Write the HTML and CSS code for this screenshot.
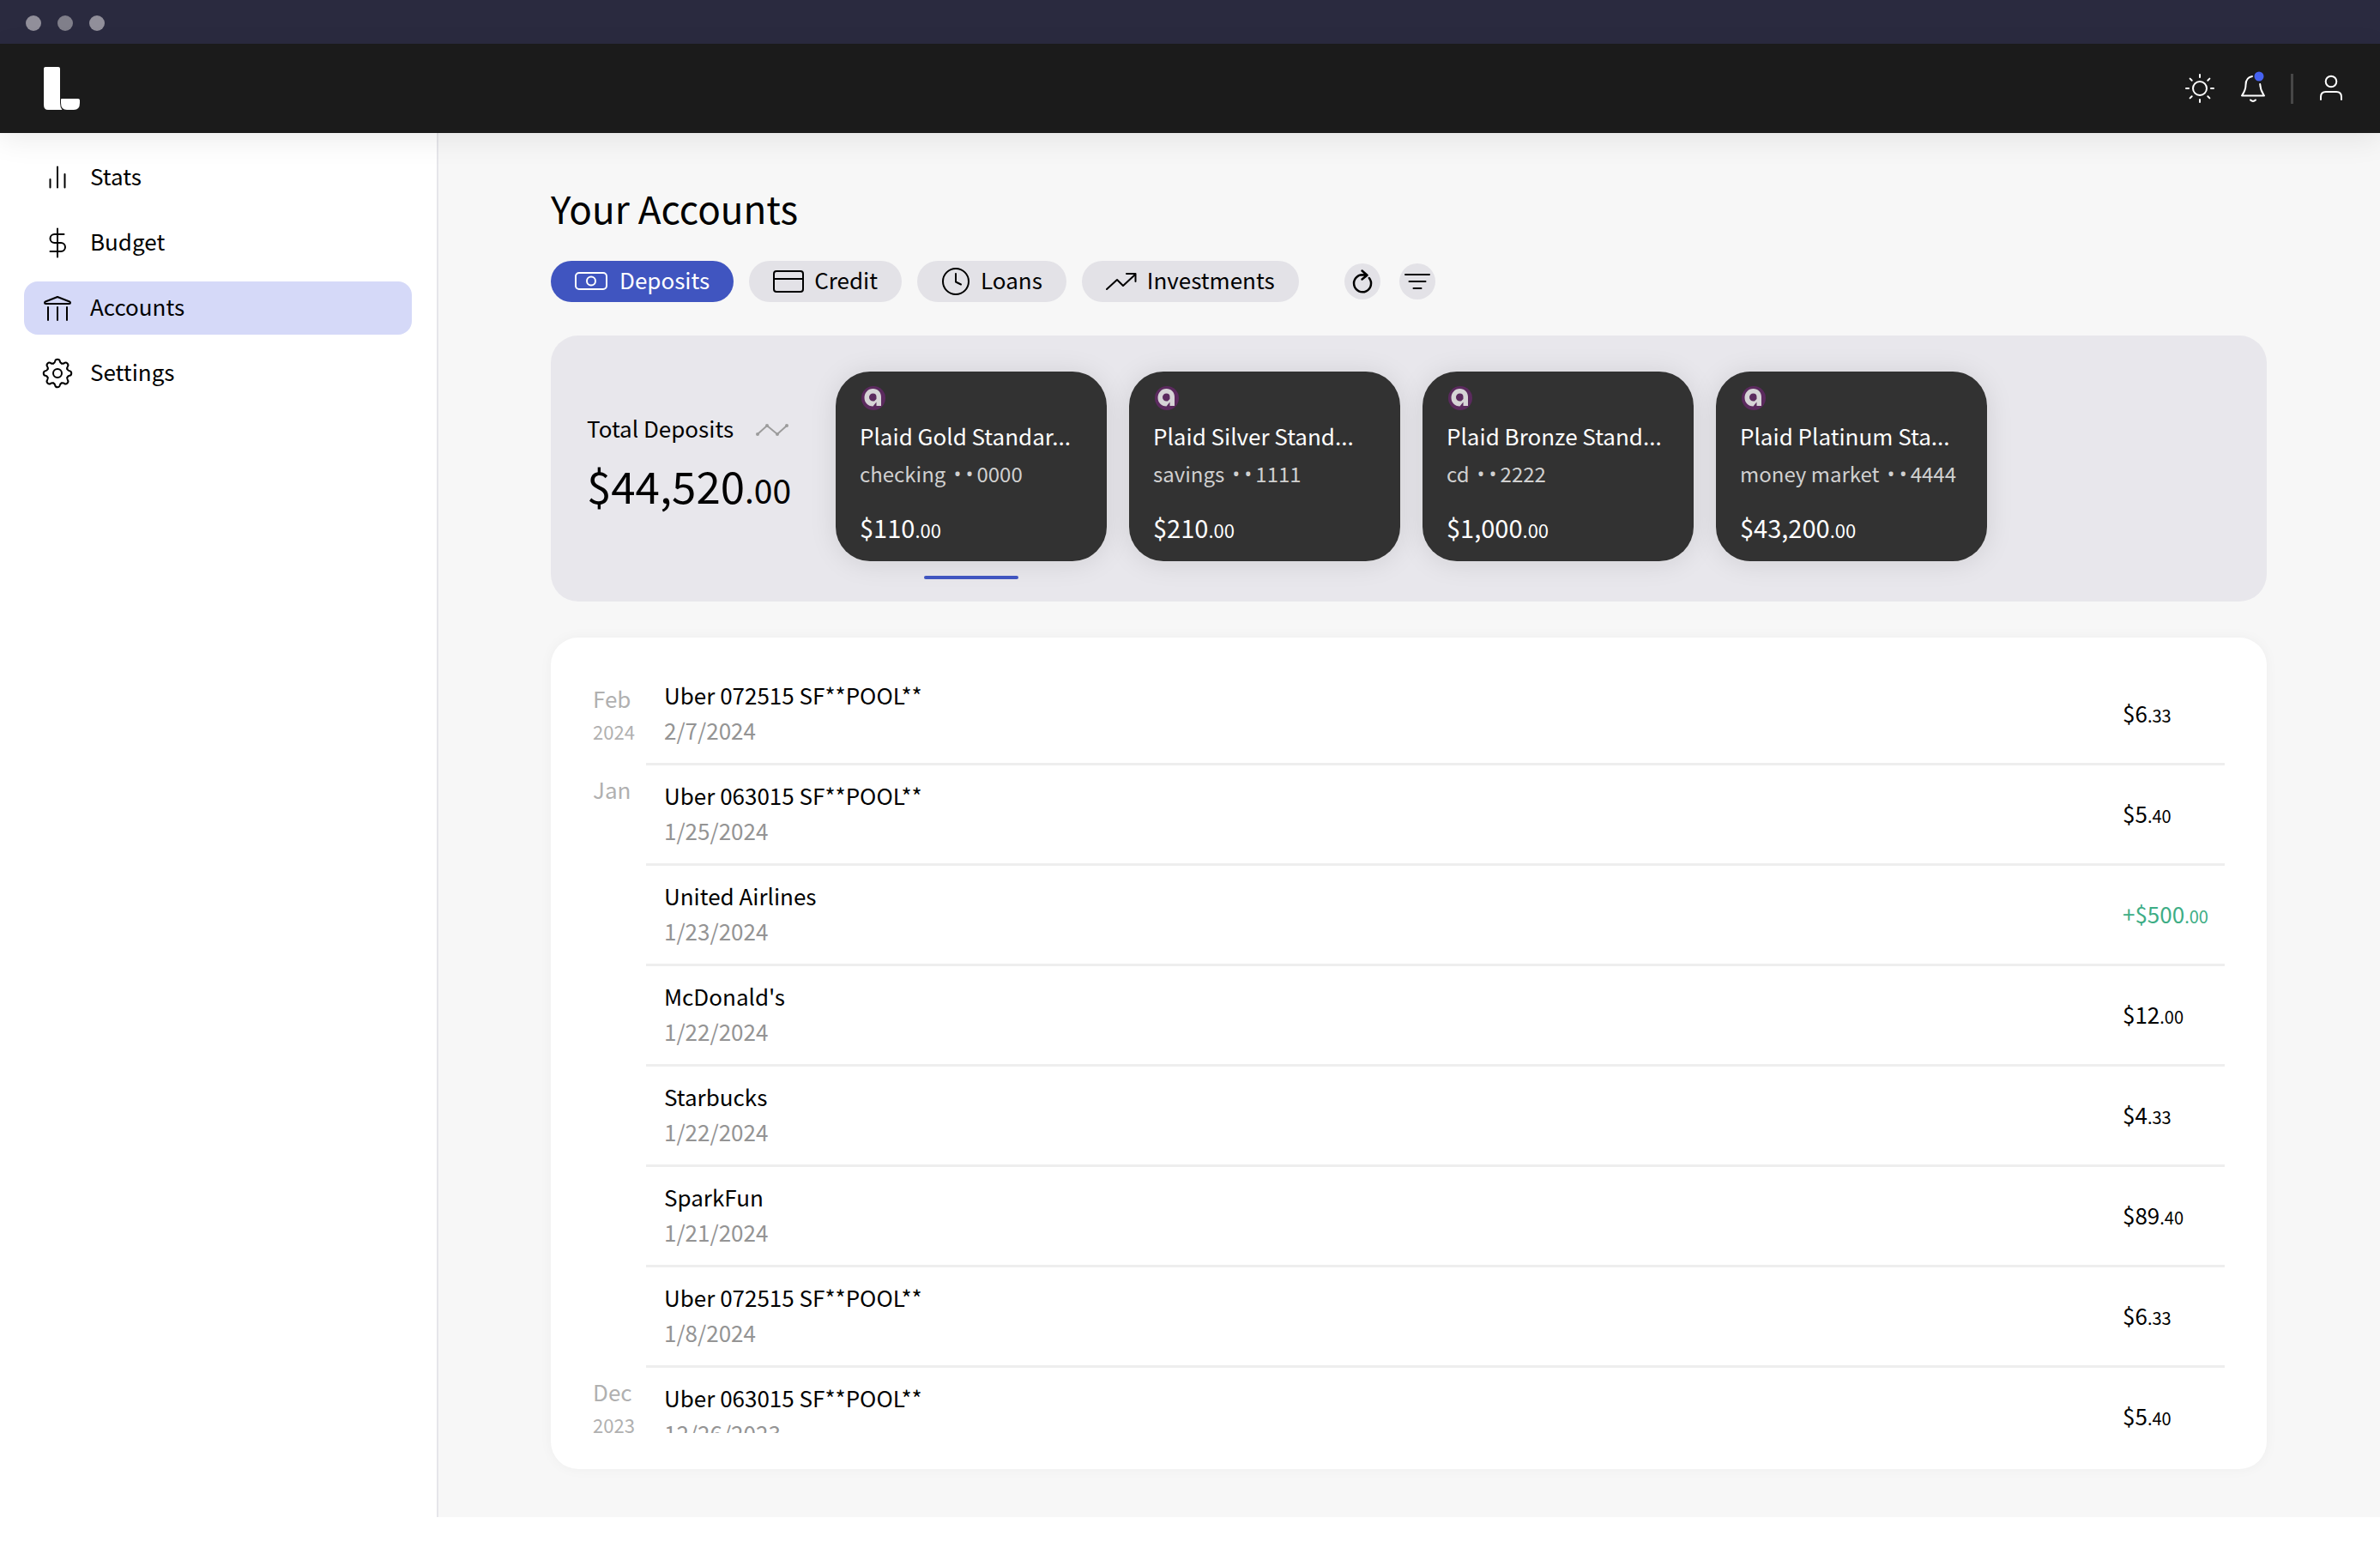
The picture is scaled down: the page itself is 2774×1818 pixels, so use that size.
FILE: index.html
```html
<!DOCTYPE html>
<html lang="en">
<head>
<meta charset="utf-8">
<title>Your Accounts</title>
<link rel="stylesheet" href="styles.css">
</head>
<body>
<svg class="defs" width="0" height="0" aria-hidden="true">
  <symbol id="bank-logo" viewBox="0 0 30 30">
    <circle cx="16" cy="15" r="14" fill="#5b2a5e"/>
    <path fill="#d6d4d6" fill-rule="evenodd" d="M15.500 4C21 4 25 8 25 13.500V24H19.500V19.500L15.500 24.500C9.500 24.500 5.500 20 5.500 14.500S9.500 4 15.500 4ZM15.500 9.500A4.500 4.500 0 0 0 15.500 18.500H17L19.500 16V13.500A4 4 0 0 0 15.500 9.500Z"/>
  </symbol>
</svg>

<div class="window-bar">
  <span class="window-dot"></span>
  <span class="window-dot window-dot-mid"></span>
  <span class="window-dot"></span>
</div>

<header class="topbar">
  <a class="brand" href="#" aria-label="Home">
    <svg width="42" height="50" viewBox="0 0 42 50">
      <path fill="#fff" d="M2 0H17Q19 0 19 2V42Q19 47 21.500 50H5Q0 50 0 44V2Q0 0 2 0Z"/>
      <path fill="#fff" d="M21 37H40Q42 37 42 39V42Q42 50 35 50H27Q20 50 20 42V38Q20 37 21 37Z"/>
    </svg>
  </a>
  <div class="topbar-actions">
    <button class="icon-button" aria-label="Theme">
      <svg width="36" height="36" viewBox="-18 -18 36 36" fill="none" stroke="#fff" stroke-width="2" stroke-linecap="round">
        <circle r="8"/>
        <path d="M0 -16V-13M0 13V16M-16 0H-13M13 0H16M-11.400 -11.400L-9.300 -9.300M9.300 9.300L11.400 11.400M-11.400 11.400L-9.300 9.300M9.300 -9.300L11.400 -11.400"/>
      </svg>
    </button>
    <button class="icon-button" aria-label="Notifications">
      <svg width="36" height="40" viewBox="0 2 36 40" fill="none" stroke="#fff" stroke-width="2" stroke-linecap="round" stroke-linejoin="round">
        <path d="M17 8C11 9 9.500 13 9.500 18C9.500 24 7.500 26.500 5 30.500H31C28.500 26.500 26.500 24 26.200 17"/>
        <path d="M15 35.500Q18 38.500 21 35.500"/>
        <circle cx="25" cy="8" r="5.500" fill="#4662f0" stroke="none"/>
      </svg>
    </button>
    <span class="topbar-divider"></span>
    <button class="icon-button" aria-label="Profile">
      <svg width="36" height="36" viewBox="0 0 36 36" fill="none" stroke="#fff" stroke-width="2" stroke-linecap="round">
        <circle cx="18" cy="10" r="6.300"/>
        <path d="M6 31V28Q6 22 12 22H24Q30 22 30 28V31"/>
      </svg>
    </button>
  </div>
</header>

<div class="shell">
  <nav class="sidebar">
    <a class="nav-item" href="#">
      <svg width="36" height="36" viewBox="0 0 36 36" class="line-icon"><path d="M9.500 20V29.500M18 5.500V29.500M26.500 14V29.500"/></svg>
      Stats
    </a>
    <a class="nav-item" href="#">
      <svg width="36" height="36" viewBox="0 0 36 36" class="line-icon"><path d="M18 1.500V34.500M25.500 8H14.500A5 5 0 0 0 14.500 18H22A5 5 0 0 1 22 28H9.500"/></svg>
      Budget
    </a>
    <a class="nav-item nav-item-active" href="#" aria-current="page">
      <svg width="36" height="36" viewBox="0 0 36 36" class="line-icon"><path d="M18 5L4 10.500Q3 11 3 12T4.500 13H31.500Q33 13 33 12T32 10.500ZM7 17V32M18 17V32M29 17V32"/></svg>
      Accounts
    </a>
    <a class="nav-item" href="#">
      <svg width="36" height="36" viewBox="-18 -18 36 36" class="line-icon">
        <circle r="5"/>
        <g id="gear-half">
          <path id="tooth" d="M-4.750 -11.460C-3.400 -12 -3 -12.400 -2.800 -14C-2.400 -17 2.400 -17 2.800 -14C3 -12.400 3.400 -12 4.750 -11.460"/>
          <use href="#tooth" transform="rotate(45)"/>
          <use href="#tooth" transform="rotate(90)"/>
          <use href="#tooth" transform="rotate(135)"/>
        </g>
        <use href="#gear-half" transform="rotate(180)"/>
      </svg>
      Settings
    </a>
  </nav>

  <main class="content">
    <h1 class="title">Your Accounts</h1>

    <div class="toolbar">
      <button class="tab tab-active">
        <svg width="40" height="28" viewBox="0 0 40 28" class="line-icon"><rect x="1" y="4" width="36" height="19" rx="4"/><circle cx="19" cy="13.500" r="5"/></svg>
        Deposits
      </button>
      <button class="tab">
        <svg width="36" height="28" viewBox="0 0 36 28" class="line-icon"><rect x="1" y="2" width="34" height="24" rx="3"/><path d="M1 11H35"/></svg>
        Credit
      </button>
      <button class="tab">
        <svg width="34" height="34" viewBox="0 0 34 34" class="line-icon"><circle cx="17" cy="17" r="15"/><path d="M17 8V17.500L23 20.500"/></svg>
        Loans
      </button>
      <button class="tab">
        <svg width="36" height="28" viewBox="0 0 36 28" class="line-icon"><path d="M1 23L13 12L20 19L34 6M24 5H34.500V14"/></svg>
        Investments
      </button>
      <div class="tools">
        <button class="round-button" aria-label="Refresh">
          <svg width="42" height="42" viewBox="0 0 42 42" class="line-icon refresh-icon"><path d="M28.800 17A10 10 0 1 1 21 13.300L26.500 13.800M20.500 8.500L26.500 13.800L20.500 18.500"/></svg>
        </button>
        <button class="round-button" aria-label="Filter">
          <svg width="30" height="24" viewBox="0 0 30 24" class="line-icon"><path d="M1 4H29M5.500 12H24.500M10.500 20H19.500"/></svg>
        </button>
      </div>
    </div>

    <section class="summary">
      <div class="total">
        <div class="total-label">Total Deposits
          <svg width="40" height="18" viewBox="0 0 40 18" fill="#9c9c9c" stroke="#9c9c9c" stroke-width="2"><path fill="none" d="M3 16L14 6L26 16L37 6"/><circle cx="3" cy="16" r="1"/><circle cx="14" cy="6" r="1"/><circle cx="26" cy="16" r="1"/><circle cx="37" cy="6" r="1"/></svg>
        </div>
        <div class="total-amount">$44,520<span class="total-cents">.00</span></div>
      </div>
      <div class="cards">
        <article class="card card-selected">
          <svg class="card-logo" width="30" height="30"><use href="#bank-logo"/></svg>
          <div class="card-name">Plaid Gold Standar...</div>
          <div class="card-sub">checking <span class="mask"><span>•</span><span>•</span></span>0000</div>
          <div class="card-amount">$110<span class="card-cents">.00</span></div>
        </article>
        <article class="card">
          <svg class="card-logo" width="30" height="30"><use href="#bank-logo"/></svg>
          <div class="card-name">Plaid Silver Stand...</div>
          <div class="card-sub">savings <span class="mask"><span>•</span><span>•</span></span>1111</div>
          <div class="card-amount">$210<span class="card-cents">.00</span></div>
        </article>
        <article class="card">
          <svg class="card-logo" width="30" height="30"><use href="#bank-logo"/></svg>
          <div class="card-name">Plaid Bronze Stand...</div>
          <div class="card-sub">cd <span class="mask"><span>•</span><span>•</span></span>2222</div>
          <div class="card-amount">$1,000<span class="card-cents">.00</span></div>
        </article>
        <article class="card">
          <svg class="card-logo" width="30" height="30"><use href="#bank-logo"/></svg>
          <div class="card-name">Plaid Platinum Sta...</div>
          <div class="card-sub">money market <span class="mask"><span>•</span><span>•</span></span>4444</div>
          <div class="card-amount">$43,200<span class="card-cents">.00</span></div>
        </article>
      </div>
    </section>

    <section class="activity">
      <div class="activity-scroll">
        <table class="transactions">
          <tbody>
            <tr><th class="month month-first" scope="row">Feb<span class="year">2024</span></th><td class="entry">Uber 072515 SF**POOL**<span class="date">2/7/2024</span></td><td class="amount">$6<span class="cents">.33</span></td></tr>
            <tr><th class="month" scope="row">Jan</th><td class="entry">Uber 063015 SF**POOL**<span class="date">1/25/2024</span></td><td class="amount">$5<span class="cents">.40</span></td></tr>
            <tr><th class="month"></th><td class="entry">United Airlines<span class="date">1/23/2024</span></td><td class="amount amount-in">+$500<span class="cents">.00</span></td></tr>
            <tr><th class="month"></th><td class="entry">McDonald's<span class="date">1/22/2024</span></td><td class="amount">$12<span class="cents">.00</span></td></tr>
            <tr><th class="month"></th><td class="entry">Starbucks<span class="date">1/22/2024</span></td><td class="amount">$4<span class="cents">.33</span></td></tr>
            <tr><th class="month"></th><td class="entry">SparkFun<span class="date">1/21/2024</span></td><td class="amount">$89<span class="cents">.40</span></td></tr>
            <tr><th class="month"></th><td class="entry">Uber 072515 SF**POOL**<span class="date">1/8/2024</span></td><td class="amount">$6<span class="cents">.33</span></td></tr>
            <tr><th class="month" scope="row">Dec<span class="year">2023</span></th><td class="entry">Uber 063015 SF**POOL**<span class="date">12/26/2023</span></td><td class="amount">$5<span class="cents">.40</span></td></tr>
          </tbody>
        </table>
      </div>
    </section>
  </main>
</div>
</body>
</html>
```

FILE: styles.css
```css
* {
  box-sizing: border-box;
}

body {
  margin: 0;
  height: 100vh;
  padding-bottom: 50px;
  display: flex;
  flex-direction: column;
  background: #fff;
  color: #000;
  font: 400 26px/36px "Noto Sans CJK JP", "Noto Sans", sans-serif;
}

button {
  font: inherit;
  color: inherit;
  border: 0;
  padding: 0;
  background: none;
}

a {
  color: inherit;
  text-decoration: none;
}

svg {
  display: block;
  flex: none;
}

.defs {
  position: absolute;
}

.line-icon {
  fill: none;
  stroke: currentColor;
  stroke-width: 2;
  stroke-linecap: round;
  stroke-linejoin: round;
}

.refresh-icon {
  stroke-width: 2.5;
}

/* Window chrome */
.window-bar {
  flex: none;
  height: 51px;
  padding: 3px 30px 0;
  display: flex;
  align-items: center;
  gap: 19px;
  background: #2a2a3f;
}

.window-dot {
  width: 18px;
  height: 18px;
  border-radius: 50%;
  background: #918f9a;
}

.window-dot-mid {
  background: #807f8a;
}

.topbar {
  flex: none;
  height: 104px;
  padding: 0 39px 0 51px;
  display: flex;
  align-items: center;
  justify-content: space-between;
  background: #1b1b1b;
  box-shadow: 0 8px 32px rgba(0, 0, 0, 0.08);
  z-index: 1;
}

.topbar-actions {
  display: flex;
  align-items: center;
  gap: 26px;
}

.topbar-divider {
  width: 3px;
  height: 35px;
  background: #474747;
}

.shell {
  flex: 1;
  min-height: 0;
  display: flex;
}

/* Sidebar */
.sidebar {
  flex: none;
  width: 511px;
  padding: 21px 29px 0 28px;
  display: flex;
  flex-direction: column;
  gap: 14px;
  border-right: 2px solid #e6e6ea;
}

.nav-item {
  height: 62px;
  padding: 0 21px 4px;
  display: flex;
  align-items: center;
  gap: 20px;
  border-radius: 16px;
}

.nav-item svg,
.tab svg {
  margin-top: 4px;
}

.nav-item-active {
  background: #d5d9f8;
}

/* Content */
.content {
  flex: 1;
  min-width: 0;
  padding: 57px 132px 56px 131px;
  display: flex;
  flex-direction: column;
  background: #f7f7f7;
}

.title {
  margin: 0 0 32px;
  font-size: 44px;
  line-height: 60px;
  font-weight: 400;
}

.toolbar {
  display: flex;
  align-items: center;
  gap: 18px;
  margin-bottom: 39px;
}

.tab {
  height: 48px;
  padding: 0 28px 4px;
  display: flex;
  align-items: center;
  gap: 12px;
  border-radius: 24px;
  background: #e3e2e7;
}

.tab-active {
  background: #4055c0;
  color: #fff;
}

.tools {
  display: flex;
  gap: 22px;
  margin-left: 35px;
}

.round-button {
  width: 42px;
  height: 42px;
  display: flex;
  align-items: center;
  justify-content: center;
  border-radius: 50%;
  background: #e3e2e7;
}

/* Totals and account cards */
.summary {
  flex: none;
  padding: 42px 42px 47px;
  display: flex;
  gap: 54px;
  border-radius: 32px;
  background: #e8e7ec;
}

.total {
  width: 236px;
  padding-top: 48px;
}

.total-label {
  display: flex;
  align-items: center;
  justify-content: space-between;
}

.total-amount {
  font-size: 51px;
  line-height: 72px;
  margin-top: 12px;
}

.total-cents {
  font-size: 39px;
}

.cards {
  display: flex;
  gap: 26px;
}

.card {
  position: relative;
  width: 316px;
  height: 221px;
  padding: 16px 28px 0;
  border-radius: 40px;
  background: #323232;
  color: #fff;
  box-shadow: 0 2px 32px rgba(0, 0, 0, 0.1);
}

.card-selected::after {
  content: "";
  position: absolute;
  left: 103px;
  right: 103px;
  bottom: -21px;
  height: 4px;
  border-radius: 2px;
  background: #4055c0;
}

.card-name {
  margin-top: 11px;
  white-space: nowrap;
}

.card-sub {
  margin-top: 8px;
  display: flex;
  font-size: 24px;
  color: #d0d0d0;
}

.mask {
  display: flex;
  gap: 5px;
  margin: 0 4px 0 9px;
  font-family: "Open Sans", sans-serif;
}

.card-amount {
  margin-top: 24px;
  font-size: 29px;
  line-height: 40px;
}

.card-cents {
  font-size: 22px;
}

/* Transactions */
.activity {
  flex: 1;
  min-height: 0;
  margin-top: 42px;
  padding: 32px 49px 42px 42px;
  display: flex;
  border-radius: 32px;
  background: #fff;
  box-shadow: 0 0 16px rgba(0, 0, 0, 0.04);
}

.activity-scroll {
  flex: 1;
  overflow-y: auto;
  scrollbar-width: none;
}

.transactions {
  width: 100%;
  border-spacing: 0;
  line-height: 41px;
}

.month {
  width: 69px;
  padding: 8px 0 0 7px;
  vertical-align: top;
  text-align: left;
  font-weight: 400;
  line-height: 39px;
  color: #b0b0b0;
}

.month-first {
  padding-top: 19px;
}

.year {
  display: block;
  font-size: 22px;
}

.entry {
  padding: 14px 0 18px 21px;
  border-bottom: 3px solid #eeeeee;
}

.date {
  display: block;
  color: #949494;
}

.amount {
  width: 119px;
  padding: 0;
  border-bottom: 3px solid #eeeeee;
}

.amount-in {
  color: #3dad85;
}

.cents {
  font-size: 20px;
}
```
